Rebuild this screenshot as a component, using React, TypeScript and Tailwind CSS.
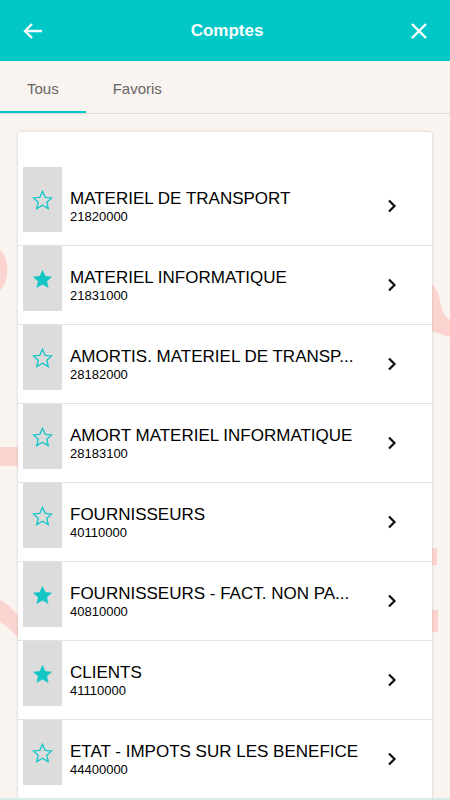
import React, { useState } from "react";

const accounts = [
  { label: "MATERIEL DE TRANSPORT", code: "21820000", fav: false },
  { label: "MATERIEL INFORMATIQUE", code: "21831000", fav: true },
  { label: "AMORTIS. MATERIEL DE TRANSP...", code: "28182000", fav: false },
  { label: "AMORT MATERIEL INFORMATIQUE", code: "28183100", fav: false },
  { label: "FOURNISSEURS", code: "40110000", fav: false },
  { label: "FOURNISSEURS - FACT. NON PA...", code: "40810000", fav: true },
  { label: "CLIENTS", code: "41110000", fav: true },
  { label: "ETAT - IMPOTS SUR LES BENEFICE", code: "44400000", fav: false },
];

const Star = ({ filled }: { filled: boolean }) => (
  <svg width="21" height="20" viewBox="0 0 24 23">
    <path
      d="M12 1.5l3.1 6.9 7.4.7-5.6 5 1.7 7.3L12 17.6l-6.6 3.8 1.7-7.3-5.6-5 7.4-.7z"
      fill={filled ? "#12c6c6" : "none"}
      stroke="#12c6c6"
      strokeWidth={filled ? 0.5 : 1.5}
    />
  </svg>
);

const Chevron = () => (
  <svg width="10" height="14" viewBox="0 0 10 14">
    <path d="M2 1.5l5.5 5.5L2 12.5" fill="none" stroke="#111" strokeWidth="2.2" />
  </svg>
);

const Blobs = () => (
  <svg className="absolute inset-0 pointer-events-none" width="450" height="800" viewBox="0 0 450 800">
    <g fill="#fbd4d0">
      <path d="M0 250 C10 258 10 282 0 290 Z" />
      <rect x="0" y="447" width="20" height="19" />
      <path d="M0 600 C8 604 16 612 20 618 L20 640 C12 630 6 626 0 622 Z" />
      <path d="M432 285 C440 290 440 305 442 310 C444 316 448 318 450 320 L450 337 C444 335 437 333 432 331 Z" />
      <rect x="432" y="548" width="5" height="17" />
      <rect x="432" y="610" width="6" height="22" />
    </g>
  </svg>
);

const App = () => {
  const [tab, setTab] = useState("Tous");

  return (
    <div
      className="relative h-screen w-full overflow-hidden bg-[#f9f4ef]"
      style={{ fontFamily: "'Liberation Sans', Arial, sans-serif" }}
    >
      <Blobs />
      <div className="relative h-[61px] bg-[#01c7c7] flex items-center justify-between px-[22px] text-white">
        <svg width="22" height="18" viewBox="0 0 22 18">
          <path d="M20 9H3M10 2L3 9l7 7" fill="none" stroke="#fff" strokeWidth="2.4" />
        </svg>
        <div className="text-[17px] font-bold">Comptes</div>
        <svg width="18" height="18" viewBox="0 0 18 18">
          <path d="M2 2l14 14M16 2L2 16" fill="none" stroke="#fff" strokeWidth="2.4" />
        </svg>
      </div>

      <div className="relative h-[53px] flex border-b border-[#dcdad7]">
        {["Tous", "Favoris"].map((t) => (
          <div
            key={t}
            onClick={() => setTab(t)}
            className={
              "flex items-center pt-[6px] px-[27px] text-[15px] text-[#666] border-b-2 cursor-pointer " +
              (tab === t ? "border-[#01c7c7]" : "border-transparent")
            }
          >
            {t}
          </div>
        ))}
      </div>

      <div className="relative mx-[18px] mt-[18px] bg-white rounded-[3px] pt-[35px] shadow-[0_0_3px_rgba(0,0,0,0.18)]">
        {accounts.map((a) => (
          <div key={a.code} className="flex items-center h-[79px] border-b border-[#e2e2e2]">
            <div className="self-start ml-[5px] w-[39px] h-[65px] bg-[#dcdcdc] flex items-center justify-center">
              <Star filled={a.fav} />
            </div>
            <div className="flex-1 min-w-0 ml-[8px] mr-[20px] text-black">
              <div className="text-[17px] leading-[20px] whitespace-nowrap">{a.label}</div>
              <div className="text-[13px] leading-[15px]">{a.code}</div>
            </div>
            <div className="mr-[35px] flex items-center">
              <Chevron />
            </div>
          </div>
        ))}
        <div className="h-[20px] flex">
          <div className="ml-[5px] w-[39px] bg-[#dcdcdc]" />
        </div>
      </div>

      <div className="absolute bottom-0 left-0 right-0 h-[2px] bg-[#d6ecea]" />
    </div>
  );
};

export default App;
